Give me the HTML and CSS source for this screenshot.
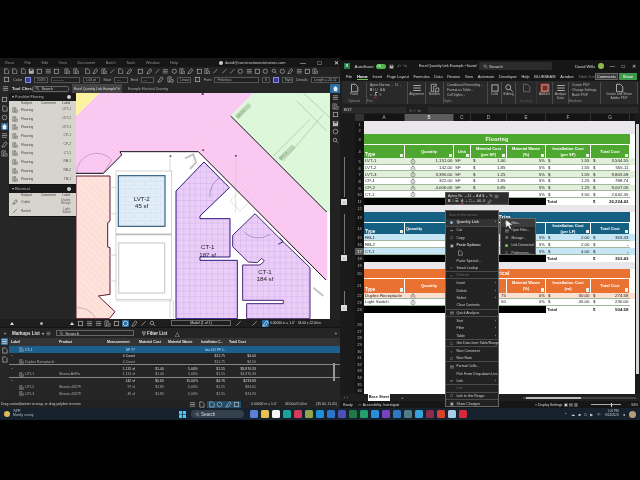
FILE: index.html
```html
<!DOCTYPE html>
<html lang="en">
<head>
<meta charset="utf-8">
<title>Bluebeam and Excel</title>
<link rel="stylesheet" href="styles.css">
</head>
<body>
<svg class="defs" width="0" height="0">
  <symbol id="doc" viewBox="0 0 8 8"><path d="M2 1h3l2 2v4H2z" fill="none" stroke="currentColor" stroke-width=".8"/></symbol>
  <symbol id="box" viewBox="0 0 8 8"><rect x="1.5" y="1.5" width="5" height="5" fill="none" stroke="currentColor" stroke-width=".8"/></symbol>
  <symbol id="save" viewBox="0 0 8 8"><path d="M1 1h5l1 1v5H1z" fill="currentColor"/><rect x="2.5" y="1.5" width="3" height="2" fill="#333"/></symbol>
  <symbol id="circ" viewBox="0 0 8 8"><circle cx="4" cy="4" r="2.6" fill="none" stroke="currentColor" stroke-width=".8"/></symbol>
  <symbol id="line" viewBox="0 0 8 8"><path d="M1.5 6.5l5-5" stroke="currentColor" stroke-width=".8"/></symbol>
  <symbol id="pen" viewBox="0 0 8 8"><path d="M1 7l1-2 3-4 2 1.500-3 4z" fill="none" stroke="currentColor" stroke-width=".8"/></symbol>
  <symbol id="mag" viewBox="0 0 8 8"><circle cx="3.400" cy="3.400" r="2" fill="none" stroke="currentColor" stroke-width=".8"/><path d="M5 5l2 2" stroke="currentColor" stroke-width=".8"/></symbol>
  <symbol id="home" viewBox="0 0 8 8"><path d="M4 1L1 4h1v3h4V4h1z" fill="#e6f0f8"/></symbol>
  <symbol id="rows" viewBox="0 0 8 8"><path d="M1 2h6M1 4h6M1 6h6" stroke="currentColor" stroke-width=".8"/></symbol>
  <symbol id="tag" viewBox="0 0 8 8"><path d="M1 1h4v1.500H3V7H1z M5 4h2v3H4z" fill="none" stroke="currentColor" stroke-width=".7"/></symbol>
  <symbol id="link" viewBox="0 0 8 8"><circle cx="4" cy="4.600" r="2.700" fill="none" stroke="#555" stroke-width=".7"/><circle cx="4" cy="4.600" r="1" fill="#999"/><rect x="3" y=".6" width="2" height="1.400" fill="#666"/></symbol>
</svg>

<div class="desktop">

  <section class="bb">
    <div class="bb-menu">
      <span>Revu</span><span>File</span><span>Edit</span><span>View</span><span>Document</span><span>Batch</span><span>Tools</span><span>Window</span><span>Help</span>
      <span class="bb-user"><i class="gear"></i>david@constructionestimators.com</span>
      <span class="bb-win">&#8212;</span><span class="bb-win">&#9633;</span><span class="bb-win">&#10005;</span>
    </div>
    <div class="bb-tools">
      <svg class="ic"><use href="#doc"/></svg><svg class="ic"><use href="#doc"/></svg><svg class="ic"><use href="#doc"/></svg><svg class="ic"><use href="#save"/></svg><svg class="ic"><use href="#box"/></svg><svg class="ic"><use href="#rows"/></svg><svg class="ic"><use href="#box"/></svg><svg class="ic gap"><use href="#tag"/></svg><svg class="ic"><use href="#tag"/></svg><svg class="ic gap"><use href="#doc"/></svg><svg class="ic"><use href="#pen"/></svg><svg class="ic"><use href="#tag"/></svg><svg class="ic"><use href="#line"/></svg><svg class="ic"><use href="#doc"/></svg><svg class="ic"><use href="#pen"/></svg><svg class="ic gap"><use href="#box"/></svg><svg class="ic"><use href="#pen"/></svg><svg class="ic"><use href="#line"/></svg><svg class="ic"><use href="#rows"/></svg><svg class="ic"><use href="#circ"/></svg><svg class="ic"><use href="#tag"/></svg><svg class="ic"><use href="#pen"/></svg><svg class="ic"><use href="#box"/></svg><svg class="ic"><use href="#tag"/></svg><svg class="ic"><use href="#line"/></svg><svg class="ic"><use href="#line"/></svg><svg class="ic"><use href="#line"/></svg><svg class="ic"><use href="#circ"/></svg><svg class="ic"><use href="#rows"/></svg><svg class="ic"><use href="#box"/></svg><svg class="ic"><use href="#circ"/></svg><svg class="ic"><use href="#mag"/></svg><svg class="ic"><use href="#circ"/></svg><svg class="ic"><use href="#pen"/></svg><svg class="ic"><use href="#rows"/></svg><svg class="ic"><use href="#box"/></svg><svg class="ic"><use href="#tag"/></svg>
    </div>
    <div class="bb-props">
      <svg class="ic"><use href="#box"/></svg><span class="lbl">Color</span><i class="swatch"></i><span class="field w16">100%</span><span class="field w28">&#8212;&#8212;&#8212;</span><span class="field w20">1.00 pt</span><span class="lbl">Start</span><span class="field w14">&#8212;</span><span class="lbl">End</span><span class="field w14">&#8212;</span><svg class="ic"><use href="#pen"/></svg><svg class="ic"><use href="#tag"/></svg><span class="field w14">Linear</span><svg class="ic"><use href="#box"/></svg><span class="lbl">Font</span><span class="field w48">Helvetica</span><span class="field w8">8</span><i class="swatch"></i><span class="field w12">Style</span><span class="lbl">Details</span><span class="field w30">Length = 20.11'</span>
    </div>
    <div class="bb-tabs">
      <svg class="ic"><use href="#rows"/></svg><b class="chest">Tool Chest</b><span class="chest-search"><svg class="ic small"><use href="#mag"/></svg>Search</span>
      <span class="tab on">Excel Quantity Link Example*<em>&#10005;</em></span><span class="tab">Example Electrical Drawing</span>
      <i class="tab-home"><svg class="ic"><use href="#home"/></svg></i>
    </div>

    <div class="bb-main">
      <nav class="rail">
        <svg class="ic"><use href="#box"/></svg><svg class="ic"><use href="#doc"/></svg><svg class="ic"><use href="#circ"/></svg><svg class="ic on"><use href="#home"/></svg><svg class="ic"><use href="#rows"/></svg><svg class="ic"><use href="#pen"/></svg><svg class="ic"><use href="#tag"/></svg>
      </nav>
      <aside class="chestp">
        <div class="set-h"><span>&#9662; Punchlist Flooring</span><i class="gear"></i></div>
        <div class="set">
          <div class="set-c"><span>Subject</span><span>Comment</span><span>Label</span></div>
          <div class="set-r"><svg class="thumb"><use href="#tag"/></svg><span>Flooring</span><em>LVT-1</em></div>
          <div class="set-r"><svg class="thumb"><use href="#tag"/></svg><span>Flooring</span><em>LVT-2</em></div>
          <div class="set-r"><svg class="thumb"><use href="#tag"/></svg><span>Flooring</span><em>LVT-3</em></div>
          <div class="set-r"><svg class="thumb"><use href="#tag"/></svg><span>Flooring</span><em>CP-1</em></div>
          <div class="set-r"><svg class="thumb"><use href="#tag"/></svg><span>Flooring</span><em>CP-2</em></div>
          <div class="set-r"><svg class="thumb"><use href="#tag"/></svg><span>Flooring</span><em>CT-1</em></div>
          <div class="set-r"><svg class="thumb"><use href="#tag"/></svg><span>Flooring</span><em>RB-1</em></div>
          <div class="set-r"><svg class="thumb"><use href="#tag"/></svg><span>Flooring</span><em>RB-2</em></div>
          <div class="set-r"><svg class="thumb"><use href="#tag"/></svg><span>Flooring</span><em>TB-1</em></div>
        </div>
        <div class="set-h"><span>&#9662; Electrical</span><i class="gear"></i></div>
        <div class="set">
          <div class="set-c"><span>Subject</span><span>Comment</span><span>Label</span></div>
          <div class="set-r tall"><svg class="thumb"><use href="#pen"/></svg><span>Outlet</span><em>Duplex<br>Recept.</em></div>
          <div class="set-r tall"><svg class="thumb"><use href="#line"/></svg><span>Switch</span><em>Light<br>Switch</em></div>
        </div>
      </aside>

      <svg class="plan" viewBox="18 36 762 678" preserveAspectRatio="none">
        <defs>
          <pattern id="pinkh" width="9" height="9" patternUnits="userSpaceOnUse" patternTransform="rotate(45)"><rect width="9" height="9" fill="#fbcdf4"/><rect width="4" height="9" fill="#f9c3ef"/></pattern>
          <pattern id="salh" width="14" height="14" patternUnits="userSpaceOnUse" patternTransform="rotate(-45)"><rect width="14" height="14" fill="#fde3dc"/><rect width="3" height="14" fill="#fcd9d1"/></pattern>
          <pattern id="cgrid" width="17" height="17" patternUnits="userSpaceOnUse"><rect width="17" height="17" fill="#ebcef7"/><path d="M0 0H17M0 0V17" stroke="#ab8adb" stroke-width="1.200"/></pattern>
          <pattern id="tile" width="30" height="24" patternUnits="userSpaceOnUse"><rect width="30" height="24" fill="#e1edf9"/><path d="M0 0H30M0 12H30M0 0V12M15 12V24" stroke="#c6d7e9" stroke-width="1.200"/></pattern>
        </defs>
        <rect x="18" y="36" width="762" height="678" fill="#fff"/>
        <polygon points="88,36 550,36 482,105 772,395 772,600 385,212 150,212 155,222 100,277 18,277 18,105" fill="url(#pinkh)"/>
        <polygon points="18,36 88,36 18,105" fill="#fbf3a0"/>
        <polygon points="550,36 780,36 780,393 772,395 482,105" fill="#dcf7d9"/>
        <path d="M610 225L720 115M640 240L760 100M700 36L780 110M680 60L770 150" stroke="#b6d4b0" stroke-width="3" fill="none"/>
        <path d="M500 110L540 70M630 235L672 195" stroke="#8fae8a" stroke-width="14" fill="none" opacity=".45"/>
        <text class="tg" transform="translate(505 110) rotate(-45)">DL7.1</text>
        <text class="tg" transform="translate(632 236) rotate(-45)">DL7.1</text>
        <polygon points="18,285 120,285 120,420 113,425 113,498 120,500 120,640 85,645 135,692 118,713 18,713" fill="url(#salh)" stroke="#5e1730" stroke-width="3"/>
        <path d="M20 277a60 60 0 0 1 105-40L100 277zM18 680a60 60 0 0 1 60 34" fill="none" stroke="#9c7f9c" stroke-width="1.500"/>
        <rect x="138" y="270" width="167" height="385" fill="#fff" stroke="#c9c9c9" stroke-width="2.500"/>
        <path d="M138 460H305" stroke="#bdbdbd" stroke-width="5"/>
        <path d="M120 320h18M120 398h18M120 522h18M120 600h18M300 222v48M300 655v58M138 660H310V713" stroke="#c4c4c4" stroke-width="2" fill="none"/>
        <rect x="145" y="284" width="140" height="152" fill="url(#tile)" stroke="#2f5e80" stroke-width="3.500"/>
        <rect x="146" y="486" width="138" height="150" fill="#fff" stroke="#cccccc" stroke-width="3.500"/>
        <polygon points="318,330 402,243 478,320 390,405 390,413 480,413 480,528 390,528 390,538 502,538 502,713 318,713" fill="url(#cgrid)" stroke="#2c1582" stroke-width="3"/>
        <polygon points="555,398 635,478 720,560 720,713 530,713 530,668 640,668 640,658 518,658 518,552 570,552 583,540 575,532 562,545 535,543 488,497 488,463" fill="url(#cgrid)" stroke="#4a2378" stroke-width="3"/>
        <path d="M450 290a60 60 0 0 0-30 60M520 450a60 60 0 0 0 80 10" fill="none" stroke="#7e5ca8" stroke-width="1.500"/>
        <path d="M478 325l55-55M480 360l38-38 30 30-38 38zM497 225v170" fill="none" stroke="#cfcfcf" stroke-width="2"/>
        <path d="M345 232l25-12 8 24-18 20M730 620l30 25" fill="none" stroke="#c4c4c4" stroke-width="6"/>
        <path d="M482 105L770 393M385 212L768 597" stroke="#101010" stroke-width="3"/>
        <path d="M18 277H100L155 222L150 212H385" fill="none" stroke="#141014" stroke-width="3"/>
        <path d="M625 490l14-8-8-10" fill="none" stroke="#3a1c6a" stroke-width="3"/>
        <rect x="299" y="223" width="5" height="5" fill="#555"/><rect x="397" y="205" width="5" height="5" fill="#6b2f7a"/><rect x="495" y="222" width="5" height="5" fill="#6b2f7a"/><rect x="395" y="36" width="6" height="6" fill="#6b2f7a"/>
        <text class="pl" x="215" y="359">LVT-2</text><text class="pl" x="215" y="381">45 sf</text>
        <text class="pl" x="413" y="504">CT-1</text><text class="pl" x="413" y="527">187 sf</text>
        <text class="pl" x="585" y="578">CT-1</text><text class="pl" x="585" y="600">184 sf</text>
      </svg>

      <nav class="rail right">
        <svg class="ic"><use href="#rows"/></svg><svg class="ic"><use href="#tag"/></svg><svg class="ic"><use href="#box"/></svg><svg class="ic"><use href="#save"/></svg><svg class="ic"><use href="#circ"/></svg><svg class="ic"><use href="#mag"/></svg>
      </nav>
    </div>

    <div class="bb-nav">
      <i class="tri"></i><i class="knob"></i><i class="tri"></i>
      <span class="navicons"><svg class="ic"><use href="#box"/></svg><svg class="ic"><use href="#rows"/></svg><svg class="ic"><use href="#rows"/></svg><svg class="ic"><use href="#tag"/></svg><svg class="ic"><use href="#box"/></svg><svg class="ic on"><use href="#circ"/></svg><svg class="ic"><use href="#pen"/></svg><svg class="ic"><use href="#line"/></svg><svg class="ic"><use href="#mag"/></svg></span>
      <span class="pager">Model (1 of 1)</span>
      <svg class="ic nv1"><use href="#line"/></svg><svg class="ic nv2"><use href="#line"/></svg><svg class="ic on nv3"><use href="#pen"/></svg>
      <span class="coords">0.00000 in = 1.0" &nbsp; 34.00 x 22.00 in</span>
    </div>

    <div class="ml-bar">
      <span class="ml-chev">&raquo;</span><b>Markups List</b><span class="ml-mid">&#9662; &nbsp;<svg class="ic small"><use href="#rows"/></svg></span>
      <span class="ml-search"><svg class="ic small"><use href="#mag"/></svg>Search</span>
      <b class="ml-filter">&#9661; Filter List</b><span class="ml-warn">&#9651;</span><span class="ml-end">&raquo;</span>
    </div>
    <div class="ml-body">
      <nav class="ml-rail"><svg class="ic on"><use href="#rows"/></svg><svg class="ic"><use href="#doc"/></svg><svg class="ic"><use href="#doc"/></svg></nav>
      <div class="ml-table">
        <div class="mr head"><span>Label</span><span>Product</span><span>Measurement</span><span>Material Cost</span><span>Material Waste</span><span class="tight">Installation C...</span><span>Total Cost</span></div>
        <div class="mr sel"><span><svg class="mk"><use href="#tag"/></svg>CT-1</span><span></span><span class="n">SF 77</span><span></span><span></span><span class="n tight">Iota 312 PF 5...</span><span></span></div>
        <div class="mr grp"><span>&#8722;</span><span></span><span class="n">0 Count</span><span></span><span></span><span class="n">$11.75</span><span class="n">$4.00</span></div>
        <div class="mr end"><span class="ind"><svg class="mk"><use href="#tag"/></svg>Duplex Receptacle</span><span></span><span class="n">0 Count</span><span></span><span></span><span class="n">$11.75</span><span class="n">$4.50</span></div>
        <div class="mr grp"><span>&#8722;</span><span></span><span class="n">1,131 sf</span><span class="n">$1.40</span><span class="n">5.00%</span><span class="n">$1.55</span><span class="n">$3,876.33</span></div>
        <div class="mr end"><span class="ind"><svg class="mk"><use href="#tag"/></svg>LVT-1</span><span>Shanta ArtFlo</span><span class="n">1,131 sf</span><span class="n">$1.40</span><span class="n">5.00%</span><span class="n">$1.55</span><span class="n">$3,876.33</span></div>
        <div class="mr grp"><span>&#8722;</span><span></span><span class="n">142 sf</span><span class="n">$5.65</span><span class="n">15.00%</span><span class="n">$4.76</span><span class="n">$233.83</span></div>
        <div class="mr"><span class="ind"><svg class="mk"><use href="#tag"/></svg>LVT-2</span><span>Shanta 43279</span><span class="n">97 sf</span><span class="n">$1.85</span><span class="n">5.00%</span><span class="n">$1.55</span><span class="n">$94.01</span></div>
        <div class="mr"><span class="ind"><svg class="mk"><use href="#tag"/></svg>LVT-3</span><span>Shanta 43279</span><span class="n">45 sf</span><span class="n">$1.85</span><span class="n">5.00%</span><span class="n">$1.55</span><span class="n">$74.94</span></div>
        <i class="ml-scroll"></i>
      </div>
    </div>
    <div class="bb-status">
      <span>Drag control/pointer to snap, or drag polyline to move</span>
      <span class="stat-r"><svg class="ic"><use href="#rows"/></svg><svg class="ic"><use href="#doc"/></svg><i class="stat-on"><svg class="ic"><use href="#doc"/></svg><svg class="ic"><use href="#circ"/></svg><svg class="ic"><use href="#pen"/></svg><svg class="ic"><use href="#box"/></svg></i><span class="st1">0.00000 in = 1.0"</span><span class="st2">34.00x22.00 in</span><span class="st3">(35.00, 11.41)</span></span>
    </div>
  </section>

  <section class="xl">
    <div class="xl-title">
      <i class="xl-logo">X</i><span class="as">AutoSave</span><i class="toggle">On</i><svg class="ic small"><use href="#save"/></svg><span class="undo">&#8630; &#8631;</span>
      <span class="fname">Excel Quantity Link Example &#8226; Saved</span>
      <span class="xl-search"><svg class="ic small"><use href="#mag"/></svg>Search</span>
      <span class="user">David Wills</span><i class="avatar"></i><span class="wbtn">&#8212;</span><span class="wbtn">&#9633;</span><span class="wbtn">&#10005;</span>
    </div>
    <div class="xl-tabs">
      <span>File</span><span class="active">Home</span><span>Insert</span><span>Page Layout</span><span>Formulas</span><span>Data</span><span>Review</span><span>View</span><span>Automate</span><span>Developer</span><span>Help</span><span>BLUEBEAM</span><span>Acrobat</span><span class="td">Table Design</span>
      <span class="cmt">Comments</span><span class="share">Share</span>
    </div>
    <div class="ribbon">
      <div class="rg w24"><svg class="big"><use href="#doc"/></svg><span>Paste</span><small>Clipboard</small></div>
      <div class="rg w36 font"><div>Aptos Narrow &#8964; 11 &#8964;</div><div><b>B</b> <i>I</i> <u>U</u> &nbsp; A A</div><div>&#9633; &nbsp; <u class="ru">A</u> &nbsp; &#9776;</div><small>Font</small></div>
      <div class="rg w18"><svg class="big"><use href="#rows"/></svg><span>Alignment</span></div>
      <div class="rg w18"><svg class="big"><use href="#tag"/></svg><span>Number</span></div>
      <div class="rg w42 styl"><div>Conditional Formatting &#8964;</div><div>Format as Table &#8964;</div><div>Cell Styles &#8964;</div><small>Styles</small></div>
      <div class="rg w14"><svg class="big"><use href="#box"/></svg><span>Cells</span></div>
      <div class="rg w14"><svg class="big"><use href="#mag"/></svg><span>Editing</span></div>
      <div class="rg w20 dim"><svg class="big"><use href="#doc"/></svg><small>Sensitivity</small></div>
      <div class="rg w16"><svg class="big red"><use href="#box"/></svg><span>Add-ins</span></div>
      <div class="rg w16"><svg class="big"><use href="#rows"/></svg><span>Analyze<br>Data</span></div>
      <div class="rg w26 stack"><div>Create PDF</div><div>Change Settings</div><div>Batch PDF</div><small>Bluebeam</small></div>
      <div class="rg w40"><svg class="big"><use href="#doc"/></svg><span>Create and Share<br>Adobe PDF</span></div>
    </div>
    <div class="fbar"><span class="namebox">B17</span><span class="fx">&#10005; &#10003; <i>fx</i></span><span class="formula"></span></div>

    <div class="xl-body">
      <div class="outline"><i class="oline a"></i><i class="obtn a">-</i><i class="oline b"></i><i class="obtn b">-</i><i class="oline c"></i><i class="obtn c">-</i></div>
      <div class="grid-wrap">
        <div class="colh"><span class="corner"></span><span>A</span><span class="csel">B</span><span>C</span><span>D</span><span>E</span><span>F</span><span>G</span></div>
        <div class="sheet">
          <div class="r h6 pale"><i>1</i></div>
          <div class="r h6 pale"><i>2</i></div>

          <div class="r h10"><i>3</i><b class="title gr">Flooring</b></div>
          <div class="r h14 gr-h"><i>4</i><b class="t">Type<u></u></b><b>Quantity<u></u></b><b>Unit<u></u></b><b>Material Cost<br>(per SF)<u></u></b><b>Material Waste<br>(%)<u></u></b><b>Installation Cost<br>(per SF)<u></u></b><b>Total Cost<u></u></b></div>
          <div class="r hr a-g"><i>5</i><span>LVT-1</span><span class="q"><svg class="lk"><use href="#link"/></svg>1,131.00</span><span>SF</span><span class="m">$<em>1.40</em></span><span class="n">5%</span><span class="m">$<em>1.55</em></span><span class="m">$<em>3,544.55</em></span></div>
          <div class="r hr"><i>6</i><span>LVT-2</span><span class="q"><svg class="lk"><use href="#link"/></svg>142.00</span><span>SF</span><span class="m">$<em>1.85</em></span><span class="n">5%</span><span class="m">$<em>1.55</em></span><span class="m">$<em>555.11</em></span></div>
          <div class="r hr a-g"><i>7</i><span>LVT-3</span><span class="q"><svg class="lk"><use href="#link"/></svg>3,390.00</span><span>SF</span><span class="m">$<em>1.25</em></span><span class="n">5%</span><span class="m">$<em>1.55</em></span><span class="m">$<em>9,805.58</em></span></div>
          <div class="r hr"><i>8</i><span>CP-1</span><span class="q"><svg class="lk"><use href="#link"/></svg>322.00</span><span>SF</span><span class="m">$<em>1.85</em></span><span class="n">5%</span><span class="m">$<em>1.25</em></span><span class="m">$<em>788.74</em></span></div>
          <div class="r hr a-g"><i>9</i><span>CP-2</span><span class="q"><svg class="lk"><use href="#link"/></svg>4,006.00</span><span>SF</span><span class="m">$<em>0.85</em></span><span class="n">5%</span><span class="m">$<em>1.25</em></span><span class="m">$<em>9,007.06</em></span></div>
          <div class="r hr"><i>10</i><span>CT-1</span><span class="q"><svg class="lk"><use href="#link"/></svg>37</span><span></span><span></span><span class="n">5%</span><span class="m">$<em>3.50</em></span><span class="m">$<em>2,642.45</em></span></div>
          <div class="r h7 tot"><i>11</i><s></s><b>Total</b><b class="m">$<em>26,224.43</em></b></div>
          <div class="r h7 pale"><i>12</i></div>

          <div class="r h10"><i>13</i><b class="title bl">Base/Trim</b></div>
          <div class="r h12 bl-h"><i>14</i><b class="t">Type<u></u></b><b class="ql">Quantity<u></u></b><b></b><b></b><b></b><b>Installation Cost<br>(per LF)<u></u></b><b>Total Cost<u></u></b></div>
          <div class="r h7 a-b"><i>15</i><span>RB-1</span><span class="q">15</span><span></span><span></span><span class="n">5%</span><span class="m">$<em>2.00</em></span><span class="m">$<em>363.43</em></span></div>
          <div class="r h7"><i>16</i><span>RB-2</span><span class="q"></span><span></span><span></span><span class="n">5%</span><span class="m">$<em>2.00</em></span><span class="m">$<em>-</em></span></div>
          <div class="r h7 a-b"><i class="rsel">17</i><span>CT-1</span><span class="q"></span><span></span><span></span><span class="n">5%</span><span class="m">$<em>4.00</em></span><span class="m">$<em>-</em></span></div>
          <div class="r h7 tot"><i>18</i><s></s><b>Total</b><b class="m">$<em>363.43</em></b></div>
          <div class="r h6 pale"><i>19</i></div>

          <div class="r h9"><i>20</i><b class="title or">Electrical</b></div>
          <div class="r h15 or-h"><i>21</i><b class="t">Type<u></u></b><b>Quantity<u></u></b><b></b><b></b><b>Material Waste<br>(%)<u></u></b><b>Installation Cost<br>(ea)<u></u></b><b>Total Cost<u></u></b></div>
          <div class="r h65 a-o"><i>22</i><span>Duplex Receptacle</span><span class="q"><svg class="lk"><use href="#link"/></svg></span><span></span><span class="n">75</span><span class="n">0%</span><span class="m">$<em>30.00</em></span><span class="m">$<em>274.58</em></span></div>
          <div class="r h65"><i>23</i><span>Light Switch</span><span class="q"><svg class="lk"><use href="#link"/></svg></span><span></span><span class="n">50</span><span class="n">0%</span><span class="m">$<em>45.00</em></span><span class="m">$<em>230.00</em></span></div>
          <div class="r h7 tot"><i>24</i><s></s><b>Total</b><b class="m">$<em>504.58</em></b></div>

          <div class="r h8 blank"><i></i></div>
          <div class="r hb blank"><i>26</i></div><div class="r hb blank"><i>27</i></div><div class="r hb blank"><i>28</i></div><div class="r hb blank"><i>29</i></div><div class="r hb blank"><i>30</i></div><div class="r hb blank"><i>31</i></div><div class="r hb blank"><i>32</i></div><div class="r hb blank"><i>33</i></div><div class="r hb blank"><i>34</i></div><div class="r hb blank"><i>35</i></div><div class="r hb blank"><i>36</i></div>
        </div>
      </div>
      <div class="vscroll"><i></i></div>
    </div>
    <div class="sheetbar"><span class="arrows">&lsaquo; &rsaquo;</span><span class="stab">Base Sheet</span><span class="plus">+</span><span class="hs"><i></i></span></div>
    <div class="xl-status"><span>Ready</span><span class="acc">&#9633; &nbsp;Accessibility: Investigate</span><span class="disp">&#9633; Display Settings</span><span class="views">&#9635; &#9636; &#9637;</span><span class="zoom"><i></i></span><span class="pct">94%</span></div>
  </section>

  <div class="mini">
    <div>Aptos Nc &#8964; 11 &#8964; A A $ &#8964; % <svg class="ic small"><use href="#rows"/></svg></div>
    <div><b>B</b> <i>I</i> &#9776; <u class="ru">A</u> &#8964; &#9633; &#8964; .00 .0 <svg class="ic small"><use href="#pen"/></svg></div>
  </div>
  <div class="cm">
    <div class="ci dimt">Search the menus</div>
    <div class="ci link sep"><i class="dot blue"></i><b>Quantity Link</b><em>&#8250;</em></div>
    <div class="ci"><i>&#9986;</i>Cut</div>
    <div class="ci"><i>&#9633;</i>Copy</div>
    <div class="ci"><i>&#9635;</i><b>Paste Options:</b></div>
    <div class="ci"><i></i><svg class="ic"><use href="#doc"/></svg></div>
    <div class="ci"><i></i>Paste Special...</div>
    <div class="ci sep"><i>&#9675;</i>Smart Lookup</div>
    <div class="ci dimt sep"><i>&#9675;</i>Refresh</div>
    <div class="ci"><i></i>Insert<em>&#8250;</em></div>
    <div class="ci"><i></i>Delete<em>&#8250;</em></div>
    <div class="ci"><i></i>Select<em>&#8250;</em></div>
    <div class="ci sep"><i></i>Clear Contents</div>
    <div class="ci sep"><i>&#9636;</i>Quick Analysis</div>
    <div class="ci"><i></i>Sort<em>&#8250;</em></div>
    <div class="ci"><i></i>Filter<em>&#8250;</em></div>
    <div class="ci sep"><i></i>Table<em>&#8250;</em></div>
    <div class="ci sep"><i>&#9633;</i>Get Data from Table/Range...</div>
    <div class="ci"><i>&#9675;</i>New Comment</div>
    <div class="ci sep"><i>&#9633;</i>New Note</div>
    <div class="ci"><i>&#9636;</i>Format Cells...</div>
    <div class="ci"><i></i>Pick From Drop-down List...</div>
    <div class="ci sep"><i>&#8734;</i>Link<em>&#8250;</em></div>
    <div class="ci dimt sep"><i></i>Link</div>
    <div class="ci sep"><i>&#9633;</i>Link to this Range</div>
    <div class="ci"><i>&#9635;</i>Show Changes</div>
  </div>
  <div class="sub">
    <div class="ci hl"><i class="dot amber"></i>New...</div>
    <div class="ci"><i>&#9636;</i>Open Files...</div>
    <div class="ci"><i>&#9881;</i>Manage...</div>
    <div class="ci"><i class="dot green"></i>Link Connected</div>
    <div class="ci"><i>&#9633;</i>Preferences...</div>
  </div>
  <svg class="cursor" viewBox="0 0 10 14"><path d="M1 1v10l3-2.500 2 4.500 2-1-2-4.500h4z" fill="#fff" stroke="#222" stroke-width=".6"/></svg>

  <footer class="taskbar">
    <div class="weather"><i class="wx"></i><div><b>74°F</b><span>Mostly sunny</span></div></div>
    <div class="center">
      <svg class="win" viewBox="0 0 8 8"><path d="M0 0h3.600v3.600H0zM4.400 0H8v3.600H4.400zM0 4.400h3.600V8H0zM4.400 4.400H8V8H4.400z" fill="#4fc3f7"/></svg>
      <span class="tsearch"><svg class="ic small"><use href="#mag"/></svg>Search</span>
      <i class="ti" style="background:#5b7fd6"></i><i class="ti" style="background:#e8c14a"></i><i class="ti" style="background:#f4f4f4"></i><i class="ti" style="background:#1aa39a"></i><i class="ti" style="background:#d43a5a"></i><i class="ti" style="background:#8fa64a"></i><i class="ti" style="background:#1f8fd8"></i><i class="ti" style="background:#2b74c7"></i><i class="ti" style="background:#4d51b8"></i><i class="ti" style="background:#1f7a45"></i><i class="ti" style="background:#22a06b"></i><i class="ti" style="background:#2a8fd8"></i><i class="ti" style="background:#7b3fc4"></i><i class="ti" style="background:#2f78c4"></i><i class="ti" style="background:#4d7d86"></i><i class="ti" style="background:#3aa0dc"></i><i class="ti" style="background:#8a2c4a"></i><i class="ti" style="background:#d8402e"></i><i class="ti" style="background:#a9cde8"></i><i class="ti" style="background:#d8283a"></i>
    </div>
    <div class="tray"><span>&#8963;</span><span>&#9729;</span><span>&#9632;</span><span>&#9633;</span><span>&#9654;</span><span>&#9737;</span><div class="clock"><span>1:01 PM</span><span>8/24/2024</span></div><span>&#9679;</span><i class="tav"></i></div>
  </footer>
</div>
</body>
</html>
```

FILE: styles.css
```css
* { box-sizing: border-box; }
html, body { margin: 0; background: #000; }
i, em { font-style: normal; }
.defs { position: absolute; }
.desktop {
  position: relative; width: 640px; height: 480px; overflow: hidden; background: #000;
  font-family: "Liberation Sans", Arial, sans-serif; font-size: 4.4px; color: #d8d8d8;
  filter: blur(.35px);
}
.ic { width: 7px; height: 7px; flex: none; color: #b5b5b5; }
.ic.small { width: 5px; height: 5px; margin-right: 1.500px; }
.ic.gap { margin-left: 3px; }
.ic.on { background: #2b6ea3; border-radius: 1px; color: #e6f0f8; }

/* Bluebeam window */
.bb { position: absolute; left: 0; top: 58px; width: 340px; height: 350px; background: #262626; display: flex; flex-direction: column; }
.bb-menu { height: 9px; background: #161616; display: flex; align-items: center; gap: 10.500px; padding-left: 5px; flex: none; color: #8f8f8f; font-size: 3.900px; }
.bb-user { margin-left: auto; margin-right: 5px; display: flex; align-items: center; gap: 2px; color: #ccc; }
.bb-win { width: 8px; text-align: center; font-size: 6px; margin-left: -2px; color: #eee; }
.gear { width: 4px; height: 4px; border-radius: 50%; background: #ccc; display: inline-block; }
.bb-tools { height: 8px; background: #222; display: flex; align-items: center; padding-left: 3px; gap: 1.750px; flex: none; }
.bb-tools .ic { width: 6.600px; height: 6.600px; }
.bb-props { height: 9px; background: #262626; display: flex; align-items: center; gap: 3px; padding-left: 3px; flex: none; color: #aaa; font-size: 3.800px; }
.swatch { width: 6px; height: 6px; background: #3a37a8; border: 1px solid #8887d8; }
.field { height: 6px; border: .5px solid #555; background: #202020; display: flex; align-items: center; padding-left: 2px; font-size: 3.400px; white-space: nowrap; overflow: hidden; }
.w8 { width: 8px; } .w12 { width: 12px; } .w14 { width: 14px; } .w16 { width: 14px; } .w20 { width: 18px; } .w28 { width: 30px; } .w30 { width: 30px; } .w48 { width: 46px; }
.bb-tabs { height: 9px; background: #262626; display: flex; align-items: center; padding-left: 2px; flex: none; position: relative; }
.chest { color: #ddd; margin-left: 3px; width: 20px; font-size: 4.200px; white-space: nowrap; }
.chest-search { width: 37px; height: 6px; border: .5px solid #666; border-radius: 2px; display: flex; align-items: center; padding-left: 2px; margin-right: 3px; color: #ddd; font-size: 3.600px; }
.tab { height: 9px; padding: 0 3px; display: flex; align-items: center; white-space: nowrap; font-size: 3.300px; color: #aaa; margin-left: 3px; }
.tab.on { background: #434343; color: #ddd; width: 50px; margin-left: 0; padding-left: 2px; justify-content: space-between; }
.tab em { font-size: 4px; }
.tab-home { position: absolute; right: 0; top: 0; width: 10px; height: 9px; background: #2b6ea3; display: flex; align-items: center; justify-content: center; }
.bb-main { height: 226px; display: flex; flex: none; }
.rail { width: 9px; flex: none; background: #262626; display: flex; flex-direction: column; align-items: center; gap: 2px; padding-top: 3px; }
.rail.right { width: 10px; gap: 1.500px; padding-top: 1px; background: #222; }
.chestp { width: 67px; flex: none; background: #262626; }
.set-h { height: 8px; background: #1a1a1a; display: flex; align-items: center; justify-content: space-between; padding: 0 5px 0 3px; font-size: 3.600px; color: #bbb; }
.set { background: #d7d4ce; color: #444; font-size: 3.400px; padding-bottom: .5px; border-bottom: 1px solid #111; }
.set-c { height: 4.500px; display: grid; grid-template-columns: 20px 21px 14px; padding-left: 12px; align-items: center; }
.set-r { height: 8.700px; display: flex; align-items: center; padding-left: 3px; position: relative; }
.set-r.tall { height: 8.800px; }
.set-r .thumb { width: 6px; height: 6px; flex: none; margin-right: 3px; color: #444; }
.set-r em { position: absolute; right: 5px; text-align: center; font-size: 3.300px; line-height: 3.300px; color: #555; }
.set-r.tall em { font-size: 2.900px; }
.plan { width: 254px; height: 226px; flex: none; display: block; }
.plan .pl { font-family: "Liberation Sans", Arial, sans-serif; font-size: 18.500px; text-anchor: middle; fill: #1c1c1c; }
.plan .tg { font-family: "Liberation Sans", Arial, sans-serif; font-size: 11px; fill: #6d8a68; }
.bb-nav { height: 8px; flex: none; background: #1e1e1e; display: flex; align-items: center; padding-left: 10px; }
.tri { width: 4px; height: 3.500px; border: 2px solid transparent; border-bottom: 3.500px solid #ddd; border-top: 0; margin-right: 26px; }
.knob { width: 3px; height: 3px; background: #aaa; border-radius: 50%; margin-right: 27px; }
.tri + .knob + .tri { margin-right: 0; }
.navicons { display: flex; gap: 2px; margin-left: 3px; margin-right: 15px; }
.pager { width: 60px; height: 6px; border: .5px solid #666; display: flex; align-items: center; justify-content: center; font-size: 3.500px; flex: none; }
.nv1 { margin-left: 4px; }
.nv2 { margin-left: 9px; }
.nv3 { margin-left: 4px; }
.coords { font-size: 3.300px; white-space: nowrap; margin-left: 1px; }
.ml-bar { height: 11px; flex: none; background: #242424; display: flex; align-items: center; padding-left: 4px; border-top: 1px solid #141414; white-space: nowrap; }
.ml-chev { width: 8px; }
.ml-bar b { font-size: 4.500px; color: #e0e0e0; }
.ml-mid { margin-left: 2px; width: 12px; display: flex; align-items: center; }
.ml-search { width: 78px; height: 6px; border: .5px solid #666; display: flex; align-items: center; padding-left: 2px; margin-left: 2px; }
.ml-filter { margin-left: 8px; }
.ml-warn { margin-left: 8px; font-size: 6px; }
.ml-end { margin-left: auto; margin-right: 3px; }
.ml-body { flex: 1; min-height: 0; display: flex; }
.ml-rail { width: 9px; flex: none; display: flex; flex-direction: column; align-items: center; gap: 2px; }
.ml-table { position: relative; width: 331px; overflow: hidden; background: #252525; }
.mr { display: grid; grid-template-columns: 48px 48px 32px 29px 34px 27px 31px; height: 6.300px; align-items: center; font-size: 3.500px; color: #aaa; white-space: nowrap; }
.mr span { padding: 0 2px; overflow: hidden; }
.mr .n { text-align: right; }
.mr .tight { font-size: 3.100px; padding: 0 1px; }
.mr .ind { padding-left: 10px; display: flex; align-items: center; }
.mr .mk { width: 5px; height: 5px; margin-right: 1px; flex: none; color: #bbb; }
.mr.head { height: 8px; background: #343434; color: #e8e8e8; font-weight: 700; font-size: 3.500px; }
.mr.sel { background: #1c5f8d; color: #cde; height: 7px; }
.mr.sel span:first-child { padding-left: 10px; display: flex; align-items: center; }
.mr.grp { color: #ddd; height: 6.200px; }
.mr.end { border-bottom: 1px solid #888; }
.ml-scroll { position: absolute; right: 5px; top: 25px; width: 2px; height: 18px; background: #999; }
.bb-status { height: 8px; flex: none; background: #222; display: flex; align-items: center; justify-content: space-between; font-size: 3.400px; padding: 0 1px; white-space: nowrap; color: #ccc; }
.stat-r { display: flex; align-items: center; gap: 2px; padding-right: 2px; }
.stat-on { display: flex; background: #214d6c; gap: 1.500px; padding: 0 1px; }
.st1 { margin-left: 8px; }
.st2 { margin-left: 6px; }
.st3 { margin-left: 7px; }

/* Excel window */
.xl { position: absolute; left: 340px; top: 60px; width: 300px; height: 348px; background: #1f1f1f; display: flex; flex-direction: column; }
.xl-title { height: 12px; flex: none; background: #161616; display: flex; align-items: center; padding-left: 4px; white-space: nowrap; }
.xl-logo { width: 6px; height: 6px; background: #1c7c43; color: #fff; font-size: 4px; font-weight: 700; text-align: center; line-height: 6px; }
.as { margin-left: 5px; }
.toggle { margin-left: 2px; width: 11px; height: 5px; border-radius: 3px; background: #4eb84e; color: #fff; font-size: 3px; line-height: 5px; text-align: left; padding-left: 1.500px; margin-right: 3px; }
.undo { margin-left: 2px; width: 22px; color: #777; font-size: 5px; }
.fname { margin-left: 1px; width: 62px; font-size: 3.500px; color: #ddd; }
.xl-search { margin-left: 2px; width: 79px; height: 8px; background: #2b2b2b; display: flex; align-items: center; padding-left: 4px; border-radius: 1px; }
.user { margin-left: 23px; font-size: 4px; }
.avatar { margin-left: 3px; width: 6px; height: 6px; border-radius: 50%; background: #8db84a; margin-right: 3px; }
.wbtn { width: 12px; text-align: center; font-size: 5px; color: #ddd; }
.xl-tabs { height: 9px; flex: none; background: #161616; display: flex; align-items: center; padding-left: 6px; gap: 4.700px; white-space: nowrap; position: relative; font-size: 3.900px; }
.xl-tabs .active { color: #fff; border-bottom: 1px solid #6cc24a; font-weight: 700; }
.xl-tabs .td { color: #7a7a7a; }
.cmt { position: absolute; left: 255px; top: .5px; width: 23px; height: 7px; background: #3c3c3c; border: .5px solid #666; text-align: center; line-height: 6px; color: #eee; }
.share { position: absolute; left: 279px; top: .5px; width: 18px; height: 7px; background: #3e9a4a; text-align: center; line-height: 7px; color: #fff; }
.ribbon { height: 23px; margin: 0 2px; flex: none; background: #292929; border-radius: 2px; display: flex; padding-top: 1px; }
.rg { position: relative; border-right: .5px solid #4a4a4a; display: flex; flex-direction: column; align-items: center; font-size: 3.300px; line-height: 3.700px; text-align: center; padding-top: 1px; color: #bbb; white-space: nowrap; flex: none; }
.rg small { position: absolute; bottom: .5px; left: 0; right: 0; font-size: 2.900px; color: #888; }
.rg .big { width: 10px; height: 10px; color: #aaa; }
.rg .big.red { background: #7c2a20; }
.rg.font, .rg.styl, .rg.stack { align-items: flex-start; padding-left: 3px; gap: 1.200px; text-align: left; padding-top: 2px; }
.rg.dim { opacity: .45; }
.w24 { width: 25px; } .w36 { width: 41px; } .w18 { width: 18px; } .w42 { width: 44px; } .rg.w14 { width: 14px; } .rg.w20 { width: 21px; } .rg.w16 { width: 16px; } .w26 { width: 32px; } .w40 { flex: 1; }
.rg.w18 { width: 18px; }
.ru { text-decoration-color: #e33; }
.fbar { height: 8px; flex: none; background: #1f1f1f; display: flex; align-items: center; margin-top: 2px; padding: 0 2px; }
.namebox { width: 64px; height: 6.500px; background: #2b2b2b; padding-left: 2px; line-height: 6.500px; }
.fx { width: 22px; padding-left: 3px; color: #888; }
.formula { flex: 1; height: 6.500px; background: #2b2b2b; }
.xl-body { height: 280px; flex: none; display: flex; position: relative; }
.outline { position: relative; width: 15px; flex: none; background: #1a1a1a; }
.oline { position: absolute; left: 4px; width: .8px; background: #777; }
.obtn { position: absolute; left: 1px; width: 6px; height: 6px; background: #ddd; color: #222; font-size: 4px; line-height: 6px; text-align: center; }
.oline.a { top: 43px; height: 40px; } .obtn.a { top: 85px; }
.oline.b { top: 100px; height: 40px; } .obtn.b { top: 141px; }
.oline.c { top: 177px; height: 14px; } .obtn.c { top: 191px; }
.grid-wrap { width: 280px; flex: none; }
.colh { height: 7px; display: grid; grid-template-columns: 9px 41px 49px 17px 36px 39px 45px 39px; background: #141414; text-align: center; color: #bbb; font-size: 4.600px; line-height: 7px; }
.colh span { border-right: .5px solid #333; }
.colh .csel { background: #5c5c5c; color: #eee; }
.corner { background: #333; }
.sheet { height: 273px; overflow: hidden; background: #eceaee; }
.r { display: grid; grid-template-columns: 9px 41px 49px 17px 36px 39px 45px 39px 4px; color: #222; background: #fff; font-size: 4.400px; white-space: nowrap; }
.r > i { background: #141414; color: #bbb; text-align: center; font-size: 4px; display: flex; align-items: center; justify-content: center; }
.r > i.rsel { background: #5c5c5c; color: #eee; }
.r > span, .r > b { display: flex; align-items: center; padding: 0 1px; overflow: hidden; position: relative; }
.h6 { height: 6.500px; } .h7 { height: 7px; } .h8 { height: 8.500px; } .h9 { height: 9px; } .h10 { height: 10px; } .h12 { height: 12px; } .h14 { height: 14px; } .h15 { height: 15px; } .hr { height: 6.700px; } .h65 { height: 6.500px; } .hb { height: 6.650px; }
.pale { background: #e9e6ec; }
.blank { background: #fff; }
.title { grid-column: 2 / 9; justify-content: center; color: #fff; font-size: 5.300px; letter-spacing: .2px; }
.title.gr { background: #4ea72e; } .title.bl { background: #156082; } .title.or { background: #e97132; }
.gr-h > b, .bl-h > b, .or-h > b { justify-content: center; text-align: center; color: #fff; font-size: 4px; line-height: 5.600px; border-right: .5px solid #fff; border-top: .5px solid #fff; }
.gr-h > b { background: #4ea72e; } .bl-h > b { background: #156082; } .or-h > b { background: #e97132; }
.r > b.t { justify-content: flex-start; align-items: flex-end; font-size: 4.600px; }
.r > b.ql { justify-content: flex-start; padding-left: 1px; }
.r > b u { position: absolute; right: 1px; bottom: 1px; width: 3.500px; height: 3.500px; background: #e8f2e2; }
.a-g { background: #e2efda; } .a-b { background: #c6e5f5; } .a-o { background: #fbdfd0; }
.a-g > span, .hr > span, .h7 > span, .h65 > span { border-bottom: .3px solid #9fb79a; }
.r .n, .r .q { justify-content: flex-end; }
.r .q { position: relative; padding-right: 1.500px; }
.lk { position: absolute; left: 5px; top: 0; width: 6px; height: 6.500px; }
.r .m { justify-content: space-between; padding-left: 2px; padding-right: 1.500px; }
.r .m em { text-align: right; }
.tot s { grid-column: 2 / 7; background: #000; text-decoration: none; }
.tot { background: #fff; }
.vscroll { width: 5px; flex: none; background: #1a1a1a; padding: 10px 1px 0; }
.vscroll i { display: block; width: 2.500px; height: 250px; background: #d5d5d5; }
.sheetbar { height: 7px; flex: none; background: #1f1f1f; display: flex; align-items: center; padding-left: 4px; position: relative; }
.arrows { width: 24px; color: #999; }
.stab { width: 22px; height: 7px; background: #fff; color: #222; text-align: center; line-height: 7px; font-weight: 700; font-size: 3.800px; white-space: nowrap; }
.plus { margin-left: 11px; }
.hs { position: absolute; left: 183px; right: 4px; top: 2.500px; height: 2px; background: #444; }
.hs i { display: block; width: 55px; height: 2px; margin-left: 3px; background: #bbb; }
.xl-status { height: 7px; flex: none; background: #161616; position: relative; display: flex; align-items: center; padding-left: 3px; font-size: 3.400px; white-space: nowrap; }
.acc { margin-left: 6px; }
.disp { position: absolute; left: 195px; }
.views { position: absolute; left: 224px; font-size: 4px; }
.zoom { position: absolute; left: 251px; width: 30px; height: .8px; background: #aaa; }
.zoom i { position: absolute; left: 20px; top: -1.500px; width: 1px; height: 4px; background: #ddd; }
.pct { position: absolute; right: 2px; }

/* Context menus */
.mini { position: absolute; left: 445px; top: 192px; width: 64px; height: 13px; background: #2d2d2d; border: .5px solid #555; padding: .5px 2px; font-size: 3.600px; color: #ddd; display: flex; flex-direction: column; justify-content: space-around; white-space: nowrap; }
.mini > div { display: flex; align-items: center; gap: 1.800px; }
.cm { position: absolute; left: 445px; top: 210px; width: 54px; height: 197px; background: #222; border: .5px solid #666; padding-top: .5px; }
.sub { position: absolute; left: 500px; top: 218px; width: 36px; height: 37px; background: #262626; border: .5px solid #666; }
.ci { height: 7.550px; display: flex; align-items: center; font-size: 3.500px; color: #cfcfcf; padding-left: 3px; position: relative; white-space: nowrap; }
.ci > i { width: 5px; margin-right: 2.500px; flex: none; text-align: center; color: #bbb; font-size: 4px; }
.ci .ic { width: 6px; height: 6px; }
.ci em { position: absolute; right: 2px; }
.ci.sep { border-bottom: .3px solid #4a4a4a; }
.ci.dimt { color: #6a6a6a; }
.ci.link { background: #333; }
.ci.hl { background: #3c3c3c; }
.sub .ci { font-size: 3.200px; }
.dot { display: inline-block; width: 3.500px !important; height: 3.500px; border-radius: 50%; margin-left: .7px; margin-right: 3.300px !important; }
.dot.blue { background: #7fb4e0; } .dot.amber { background: #e0a92f; } .dot.green { background: #6ecb5a; }
.cursor { position: absolute; left: 505px; top: 219px; width: 8px; height: 11px; }

/* Taskbar */
.taskbar { position: absolute; left: 0; top: 408px; width: 640px; height: 12px; background: #16232f; display: flex; align-items: center; }
.weather { position: absolute; left: 4px; top: 0; height: 12px; display: flex; align-items: center; gap: 3px; font-size: 3.500px; line-height: 3.800px; }
.weather b { display: block; color: #ddd; font-weight: 400; }
.weather span { color: #bbb; }
.wx { width: 6px; height: 6px; border-radius: 50%; background: #e0b85a; }
.center { margin-left: 179px; display: flex; align-items: center; gap: 3.500px; }
.win { width: 7px; height: 7px; margin-right: 1px; }
.tsearch { width: 53px; height: 8px; border-radius: 4px; background: #33414e; display: flex; align-items: center; padding-left: 4px; color: #ddd; font-size: 4.500px; margin-right: 3px; }
.ti { width: 7.500px; height: 7.500px; border-radius: 1.500px; flex: none; }
.tray { margin-left: auto; display: flex; align-items: center; gap: 3.500px; padding-right: 4px; font-size: 4px; color: #ccc; }
.clock { display: flex; flex-direction: column; align-items: flex-end; font-size: 3px; line-height: 3.800px; margin: 0 1px; }
.tav { width: 7px; height: 7px; border-radius: 50%; background: #b69c7c; }
```
